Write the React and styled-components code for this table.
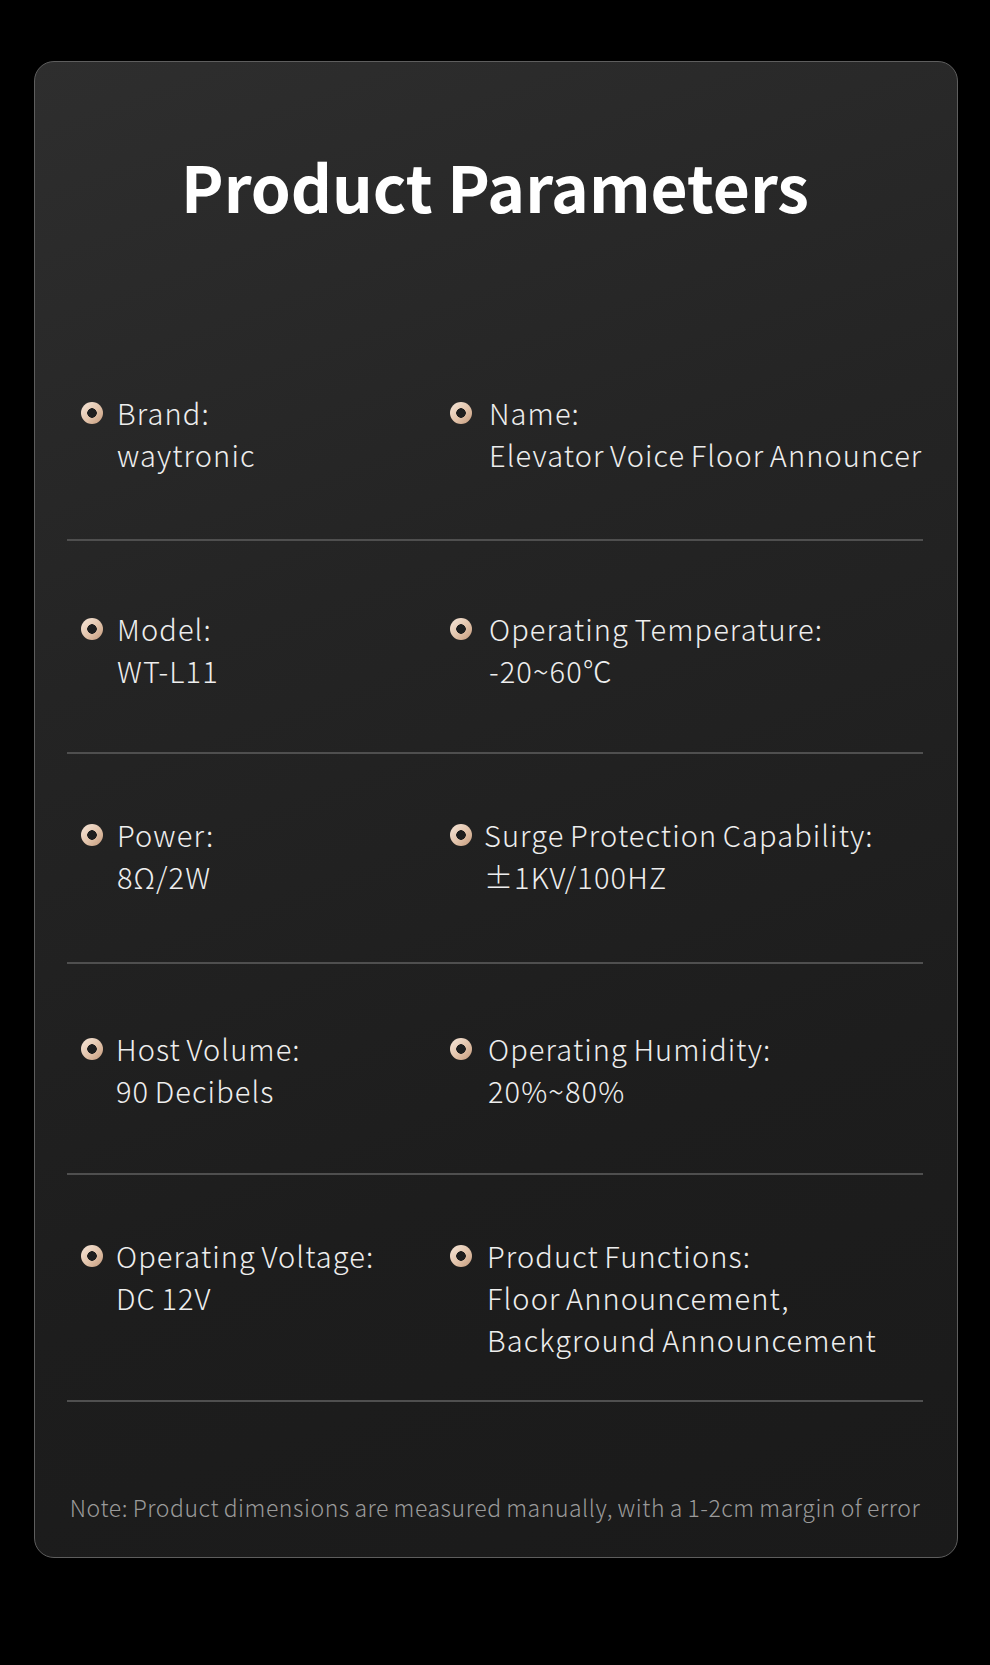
import React from "react";
import styled, { createGlobalStyle } from "styled-components";

const Global = createGlobalStyle`
  html, body { margin: 0; padding: 0; background: #000; }
  body { font-family: "Noto Sans CJK SC", "Noto Sans", sans-serif; }
  * { box-sizing: border-box; }
`;

const Page = styled.div`
  width: 990px;
  min-height: 1665px;
  background: #000;
  padding: 61px 32px 0 34px;
`;

const Card = styled.section`
  width: 924px;
  border: 1px solid #5e5e5e;
  border-radius: 20px;
  background: linear-gradient(160deg, #2e2e2e 0%, #242424 35%, #1d1d1d 70%, #1a1a1a 100%);
  padding: 0 34px 35px 32px;
`;

const Title = styled.h1`
  margin: 0;
  padding: 91px 0 111px;
  text-align: center;
  font-size: 64px;
  line-height: 64px;
  font-weight: 700;
  color: #ffffff;
  letter-spacing: 0;
`;

const Row = styled.div`
  display: grid;
  grid-template-columns: 369px 1fr;
  align-items: start;
  height: ${(p) => p.$h}px;
  padding: ${(p) => p.$pt}px 0 0 14px;
  border-bottom: 2px solid #4f4f4f;
`;

const Item = styled.div`
  display: flex;
  align-items: flex-start;
  gap: ${(p) => p.$gap}px;
`;

const Dot = styled.span`
  flex: none;
  width: 22px;
  height: 22px;
  margin-top: 11px;
  border-radius: 50%;
  background: radial-gradient(circle at 50% 50%, #1e1e1e 0 4.5px, transparent 5px),
    linear-gradient(135deg, #f6e7da 0%, #e2c3aa 55%, #c49a7c 100%);
`;

const Text = styled.div`
  font-size: 29px;
  font-weight: 300;
  letter-spacing: 1.1px;
  word-spacing: -2px;
  line-height: 42px;
  color: #eeeeee;
  white-space: nowrap;
`;

const Note = styled.p`
  margin: 0;
  padding-top: 90px;
  text-align: center;
  font-size: 23px;
  font-weight: 300;
  letter-spacing: 0.55px;
  word-spacing: -1px;
  line-height: 30px;
  color: #9a9a9a;
  white-space: nowrap;
`;

const rows = [
  {
    h: 213,
    pt: 63,
    items: [
      { gap: 14, lines: ["Brand:", "waytronic"] },
      { gap: 17, lines: ["Name:", "Elevator Voice Floor Announcer"] },
    ],
  },
  {
    h: 213,
    pt: 66,
    items: [
      { gap: 14, lines: ["Model:", "WT-L11"] },
      { gap: 17, lines: ["Operating Temperature:", "-20~60℃"] },
    ],
  },
  {
    h: 210,
    pt: 59,
    items: [
      { gap: 14, lines: ["Power:", "8Ω/2W"] },
      { gap: 12, lines: ["Surge Protection Capability:", "±1KV/100HZ"] },
    ],
  },
  {
    h: 211,
    pt: 63,
    items: [
      { gap: 13, lines: ["Host Volume:", "90 Decibels"] },
      { gap: 16, lines: ["Operating Humidity:", "20%~80%"] },
    ],
  },
  {
    h: 227,
    pt: 59,
    items: [
      { gap: 13, lines: ["Operating Voltage:", "DC 12V"] },
      {
        gap: 15,
        lines: ["Product Functions:", "Floor Announcement,", "Background Announcement"],
      },
    ],
  },
];

export default function App() {
  return (
    <>
      <Global />
      <Page>
        <Card>
          <Title>Product Parameters</Title>
          {rows.map((r, i) => (
            <Row key={i} $h={r.h} $pt={r.pt}>
              {r.items.map((it, j) => (
                <Item key={j} $gap={it.gap}>
                  <Dot />
                  <Text>
                    {it.lines.map((l, k) => (
                      <div key={k}>{l}</div>
                    ))}
                  </Text>
                </Item>
              ))}
            </Row>
          ))}
          <Note>
            Note: Product dimensions are measured manually, with a 1-2cm margin of error
          </Note>
        </Card>
      </Page>
    </>
  );
}
